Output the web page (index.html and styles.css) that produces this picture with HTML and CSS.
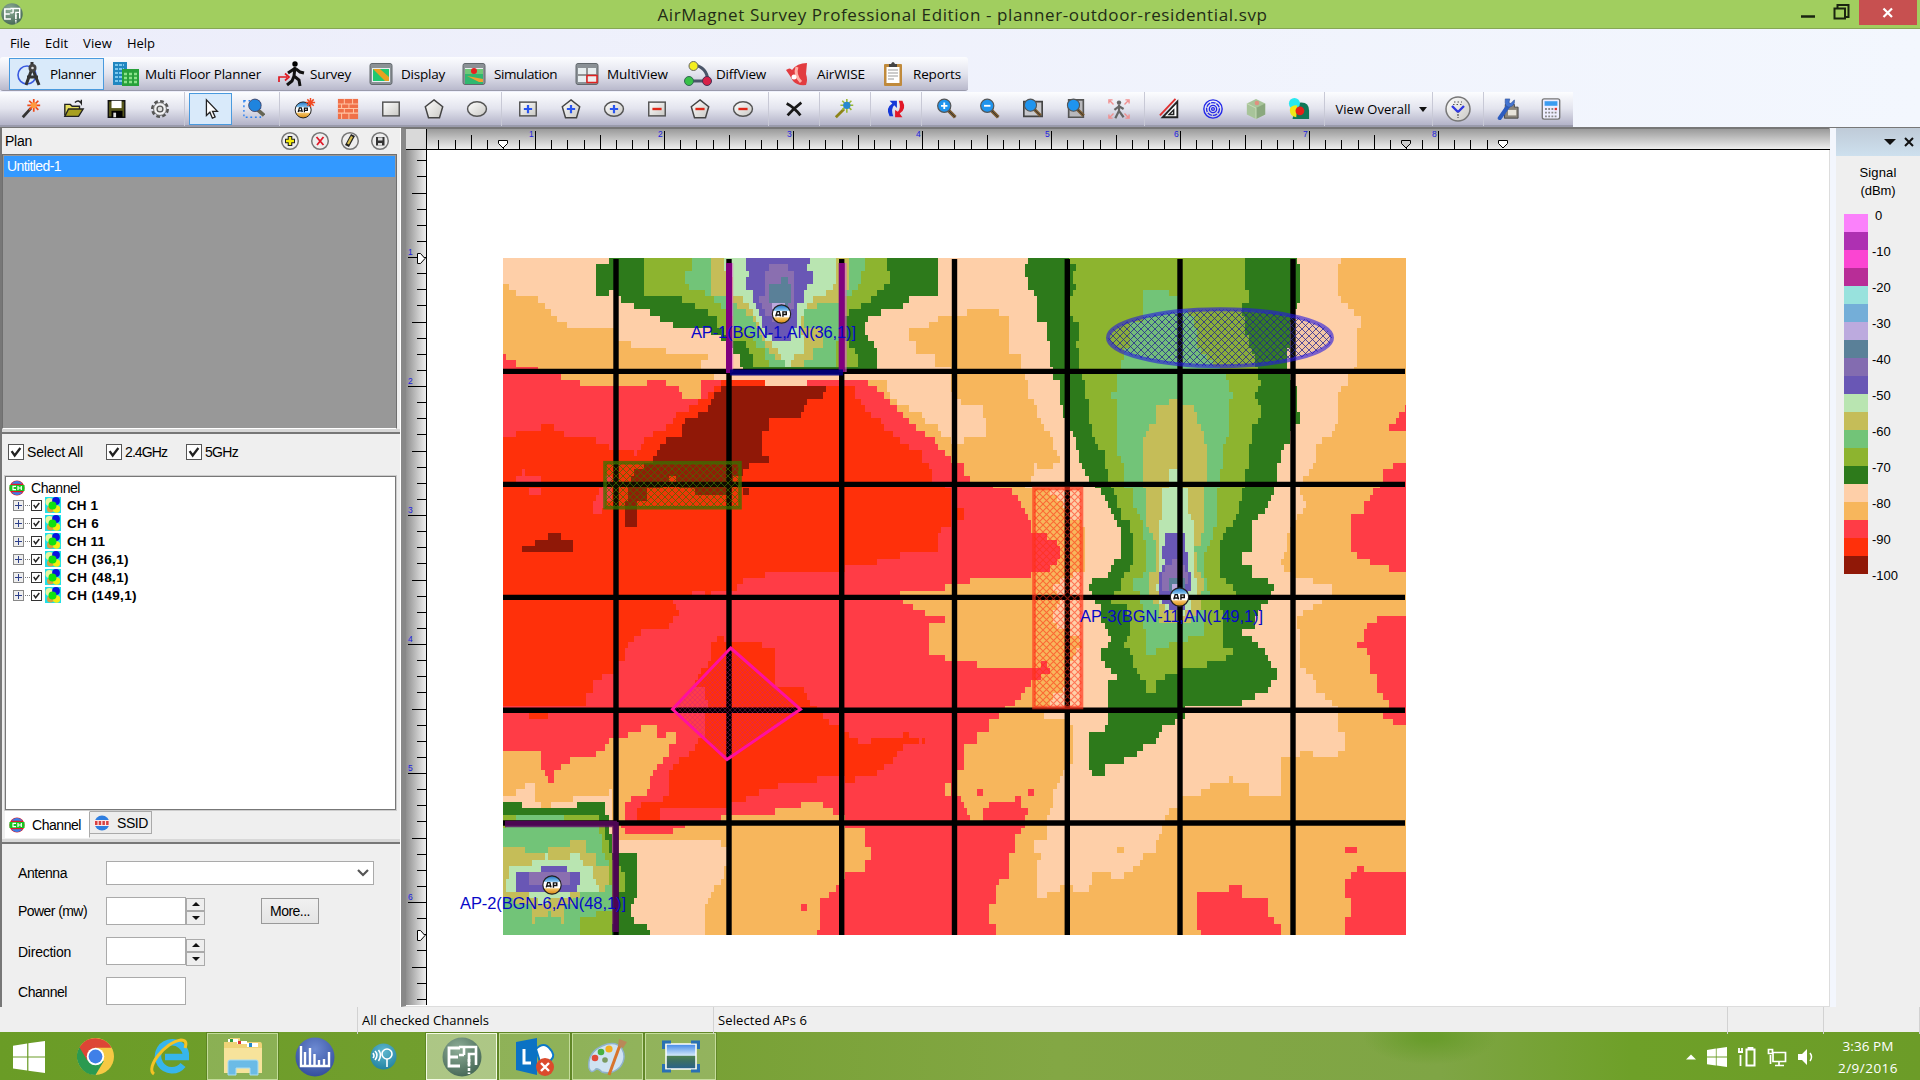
FILE: index.html
```html
<!DOCTYPE html>
<html lang="en">
<head>
<meta charset="utf-8">
<title>AirMagnet Survey Professional Edition</title>
<link rel="stylesheet" href="styles.css">
</head>
<body>
<svg width="0" height="0" class="defs" aria-hidden="true">
  <defs>
    <linearGradient id="shape" x1="0" y1="0" x2="1" y2="1"><stop offset="0" stop-color="#fff"/><stop offset="1" stop-color="#c9c8c4"/></linearGradient>
    <linearGradient id="apfill" x1="0" y1="0" x2="0" y2="1"><stop offset="0" stop-color="#1d6fc0"/><stop offset=".3" stop-color="#7fc0ef"/><stop offset=".36" stop-color="#fff"/><stop offset=".64" stop-color="#fff"/><stop offset=".72" stop-color="#f3c060"/><stop offset="1" stop-color="#d98a10"/></linearGradient>
    <radialGradient id="moss" cx=".4" cy=".3" r=".8"><stop offset="0" stop-color="#8fae98"/><stop offset="1" stop-color="#3f6150"/></radialGradient>
    <radialGradient id="indigo" cx=".5" cy=".3" r=".8"><stop offset="0" stop-color="#6d8ad2"/><stop offset="1" stop-color="#2c4797"/></radialGradient>
    <radialGradient id="teal" cx=".5" cy=".3" r=".8"><stop offset="0" stop-color="#5fb8cf"/><stop offset="1" stop-color="#1b7c9c"/></radialGradient>
    <linearGradient id="sky" x1="0" y1="0" x2="0" y2="1"><stop offset="0" stop-color="#3f86e8"/><stop offset=".45" stop-color="#cfe6fa"/><stop offset=".5" stop-color="#4c7f55"/><stop offset=".68" stop-color="#3c6f64"/><stop offset="1" stop-color="#28618c"/></linearGradient>
    <symbol id="i-ap" viewBox="0 0 22 22"><circle cx="11" cy="11" r="9.600" fill="url(#apfill)" stroke="#222" stroke-width="1.200"/><path d="M5 13.500l1.500-5h2.200l1.300 5M6 12h3.400M12.500 13.800v-5h3.500v2.800h-3.400" fill="none" stroke="#111" stroke-width="1.500"/></symbol>
    <symbol id="i-pent" viewBox="0 0 24 24"><path d="M12 2L21.500 9.500 18 21.500H6L2.500 9.500z" fill="url(#shape)" stroke="#444" stroke-width="1.600"/></symbol>
    <symbol id="i-plus" viewBox="0 0 24 24"><path d="M12 7.500v9M7.500 12h9" stroke="#2a55f0" stroke-width="2.400"/></symbol>
    <symbol id="i-minus" viewBox="0 0 24 24"><path d="M7 12h10" stroke="#e02818" stroke-width="2.600"/></symbol>
    <symbol id="i-rect" viewBox="0 0 24 24"><rect x="3" y="4.500" width="18" height="15" fill="url(#shape)" stroke="#555" stroke-width="1.600"/></symbol>
    <symbol id="i-oval" viewBox="0 0 24 24"><ellipse cx="12" cy="12" rx="10.300" ry="8" fill="url(#shape)" stroke="#555" stroke-width="1.600"/></symbol>
    <symbol id="i-lens" viewBox="0 0 24 24"><path d="M13 13l8 8" stroke="#7a5a30" stroke-width="4"/><path d="M13 13l8 8" stroke="#333" stroke-width="1"/><circle cx="9" cy="8.500" r="7.200" fill="#1f94ee" stroke="#555" stroke-width="1.300"/></symbol>
    <symbol id="i-win" viewBox="0 0 26 26"><path d="M0 3.800L11.500 2v10.500H0zM12.500 1.800L26 0v12.500H12.500zM0 13.500h11.500V24L0 22.300zM12.500 13.500H26V26l-13.500-1.800z" fill="#fff"/></symbol>
    <symbol id="i-ch" viewBox="0 0 16 16"><circle cx="8" cy="8" r="7.600" fill="#e01828"/><path d="M2.600 3.800a6.500 6.500 0 0 1 10.800 0zM2.600 12.200a6.500 6.500 0 0 0 10.800 0z" fill="#3c7ee8"/><path d="M.5 5h15v6H.5z" fill="#17c51f"/><path d="M7 6.300H4v3.400h3M9 6v4M12.300 6v4M9 8h3.300" fill="none" stroke="#fff" stroke-width="1.200"/></symbol>
    <symbol id="i-node" viewBox="0 0 16 16"><path d="M0 0h16v16H0z" fill="#1fe0e8"/><circle cx="4.500" cy="5" r="4" fill="#e9f5a0"/><circle cx="11" cy="4" r="3.900" fill="#0a12e0"/><circle cx="5.500" cy="12" r="3.500" fill="#d8a040"/><circle cx="11.500" cy="12" r="3.700" fill="#f4ee10"/><circle cx="7.500" cy="8.500" r="4" fill="#10e010"/></symbol>
    <symbol id="i-tick" viewBox="0 0 16 16"><path d="M3 7l3.500 5L13 3.500" fill="none" stroke="#222" stroke-width="2.600"/></symbol>
    <symbol id="i-logo" viewBox="0 0 40 40"><circle cx="20" cy="20" r="19.500" fill="url(#moss)"/><path d="M18 11H7v18h11M7 20h9" fill="none" stroke="#fff" stroke-width="2.800"/><path d="M17 10h17v18M22 10v8M17 18h5M34 17h-7v11" fill="none" stroke="#fff" stroke-width="2.600"/><path d="M27 22v15" stroke="#fff" stroke-width="2.600" stroke-dasharray="3 1.500"/></symbol>
    <symbol id="i-frame" viewBox="0 0 24 24"><rect x="1" y="1.500" width="22" height="21" rx="2" fill="#8b9196" stroke="#62686d"/><path d="M3 6h18v14H3z" fill="#e8eef0"/></symbol>
    <pattern id="h-green" width="7" height="7" patternUnits="userSpaceOnUse"><path d="M0 0l7 7M7 0L0 7" stroke="#3f7000" stroke-opacity=".7"/></pattern>
    <pattern id="h-red" width="7" height="7" patternUnits="userSpaceOnUse"><path d="M0 0l7 7M7 0L0 7" stroke="#ff2a10" stroke-opacity=".55" stroke-width="1.100"/></pattern>
    <pattern id="h-blue" width="7" height="7" patternUnits="userSpaceOnUse"><path d="M0 0l7 7M7 0L0 7" stroke="#202090" stroke-opacity=".75"/></pattern>
    <pattern id="h-pink" width="5" height="5" patternUnits="userSpaceOnUse"><path d="M0 0l5 5M5 0L0 5" stroke="#c81890" stroke-opacity=".42" stroke-width=".8"/></pattern>
  </defs>
</svg>

<div class="app">
  <header class="titlebar">
    <svg class="title-logo" width="22" height="22"><use href="#i-logo"/></svg>
    <h1 class="title"><span data-w="610">AirMagnet Survey Professional Edition - planner-outdoor-residential.svp</span></h1>
    <div class="win-buttons">
      <svg width="16" height="28"><path d="M1 16.500h14" stroke="#1a2410" stroke-width="2.500"/></svg>
      <svg width="18" height="28"><path d="M4.500 8V5h11v12h-3" fill="none" stroke="#1a2410" stroke-width="2"/><path d="M1.500 8.500h10.500v10H1.500z" fill="none" stroke="#1a2410" stroke-width="2"/></svg>
      <span class="close"><svg width="12" height="12"><path d="M1.500 1.500l8.500 8.500M10 1.500L1.500 10" stroke="#fff" stroke-width="2.200"/></svg></span>
    </div>
  </header>

  <nav class="menubar"><span data-w="20">File</span><span data-w="23">Edit</span><span data-w="29">View</span><span data-w="28">Help</span></nav>

  <div class="modes">
    <div class="mode active"><svg width="26" height="26"><circle cx="10" cy="14" r="9" fill="none" stroke="#3a5ae0" stroke-width="1.600"/><path d="M15 1v4M14.500 9L9 24M16 9l6 15M10 16h11" stroke="#333" stroke-width="3"/><circle cx="15.500" cy="7" r="4" fill="#444"/><circle cx="15.500" cy="7" r="1.300" fill="#ddd"/></svg><span data-w="46">Planner</span></div>
    <div class="mode"><svg width="26" height="26"><path d="M0 1h14v23H0z" fill="#2186c0"/><path d="M2 4h9M2 8h9M2 12h9M2 16h9M2 20h9" stroke="#7cc8ee" stroke-width="2" stroke-dasharray="3 1"/><path d="M9 8h17v17H9z" fill="#27a03a"/><path d="M11 13h13M11 17h13M11 21h13" stroke="#8be28a" stroke-width="2.400" stroke-dasharray="3 2"/></svg><span data-w="116">Multi Floor Planner</span></div>
    <div class="mode"><svg width="27" height="26"><circle cx="17" cy="3" r="2.700"/><path d="M17 6l-1 9M16 8l-6 4M18 8l4 3 4 1M16 15l5 4 1 6M16 15l-2 5-5 4" fill="none" stroke="#111" stroke-width="3"/><path d="M1 21v-5h8M7 12.500l4 3.500-4 3.500" fill="none" stroke="#e01820" stroke-width="1.700"/></svg><span data-w="41">Survey</span></div>
    <div class="mode"><svg width="24" height="24"><use href="#i-frame"/><path d="M4 7h16v12H4z" fill="#20c870"/><path d="M4 7l7 0 9 8v4h-4z" fill="#e8a020"/></svg><span data-w="44">Display</span></div>
    <div class="mode"><svg width="24" height="24"><use href="#i-frame"/><path d="M3 12h18v10H3z" fill="#30b870"/><path d="M5 14l12 6h4v-3z" fill="#f0a030"/><path d="M3 7h18v5H3z" fill="#70c878"/><circle cx="12" cy="9" r="3" fill="#e82020"/></svg><span data-w="63">Simulation</span></div>
    <div class="mode"><svg width="24" height="24"><use href="#i-frame"/><path d="M3 13h18M12 6v14" stroke="#777" stroke-width="1.500"/><path d="M12 13.500h10v7H12z" fill="#eee" stroke="#e02020" stroke-width="1.500"/></svg><span data-w="61">MultiView</span></div>
    <div class="mode"><svg width="28" height="26"><path d="M10 4q13 2 14 16M6 20h18" fill="none" stroke="#4a5568" stroke-width="3"/><circle cx="9.500" cy="5" r="4.500" fill="#f4ee20" stroke="#666"/><circle cx="5" cy="20" r="4.500" fill="#38c048" stroke="#365"/><circle cx="23" cy="20" r="4.500" fill="#d82048" stroke="#435"/></svg><span data-w="50">DiffView</span></div>
    <div class="mode"><svg width="24" height="24"><path d="M1 8q4-3 6 0Q12 1 22 1l-1 11q2 6 0 11Q12 24 8 19 4 12 1 8z" fill="#e23c40"/><path d="M12 5q-3 8 4 15" fill="none" stroke="#ffb0a8" stroke-width="3"/><circle cx="9" cy="15" r="2.500" fill="#fff"/></svg><span data-w="48">AirWISE</span></div>
    <div class="mode"><svg width="21" height="26"><rect x="1" y="3" width="18" height="22" rx="1" fill="#c08a3c"/><path d="M3.500 6h13v16h-13z" fill="#fff"/><path d="M5 9h10M5 12h10M5 15h10M5 18h6" stroke="#999"/><path d="M6 6V3h2q2-4 4 0h2v3z" fill="#444"/></svg><span data-w="48">Reports</span></div>
  </div>

  <div class="tools">
    <div class="group">
      <i><svg viewBox="0 0 24 24"><path d="M3 21l9-10" stroke="#333" stroke-width="3"/><path d="M15 1v14M8 8h14M10 3l10 10M20 3L10 13" stroke="#f04a18" stroke-width="1.900"/><circle cx="15" cy="8" r="3.300" fill="#ff9a40"/></svg></i>
      <i><svg viewBox="0 0 24 24"><path d="M2 19V7h6l2 2h8v3" fill="#e8e060" stroke="#222" stroke-width="1.500"/><path d="M2 20l4-8h16l-5 8z" fill="#a8a020" stroke="#222" stroke-width="1.500"/><path d="M13 5q4-4 7 1v-4" fill="none" stroke="#222" stroke-width="1.500"/></svg></i>
      <i><svg viewBox="0 0 24 24"><path d="M2.500 3h18v18h-18z" fill="#55551a" stroke="#111" stroke-width="1.500"/><path d="M6 3h11v8H6z" fill="#fff"/><path d="M6 14h12v7H6z" fill="#000"/><path d="M8 16h3v5H8z" fill="#ddd"/></svg></i>
      <i><svg viewBox="0 0 24 24"><circle cx="12" cy="12" r="8.300" fill="none" stroke="#555" stroke-width="3" stroke-dasharray="4 2.500"/><circle cx="12" cy="12" r="7" fill="#f2f2f4" stroke="#666"/><circle cx="12" cy="12" r="3.200" fill="#ddd" stroke="#555" stroke-width="1.400"/></svg></i>
    </div>
    <div class="group">
      <i class="active"><svg viewBox="0 0 24 24"><path d="M7 2v17l3.800-3.500L13.500 22l3-1.300-2.800-6.200H19z" fill="#fff" stroke="#222" stroke-width="1.400"/></svg></i>
      <i><svg viewBox="0 0 24 24"><path d="M1 3h18v18H1z" fill="none" stroke="#2a80f0" stroke-dasharray="2 3" stroke-width="1.500"/><path d="M15 12l8 7" stroke="#665" stroke-width="4"/><circle cx="13" cy="8" r="6.800" fill="#1f84de" stroke="#446"/></svg></i>
    </div>
    <div class="group">
      <i><svg viewBox="0 0 24 24"><use href="#i-ap" x="0" y="3" width="20" height="20"/><path d="M18 0v10M13 5h10M14.500 1.500l7 7M21.500 1.500l-7 7" stroke="#f04820" stroke-width="1.600"/></svg></i>
      <i><svg viewBox="0 0 24 24"><path d="M1 1h22v22H1z" fill="#f07048"/><path d="M1 6.500h22M1 11.500h22M1 16.500h22M8 1v5.500M17 1v5.500M5 6.500v5M13 6.500v5M8 11.500v5M18 11.500v5M5 16.500V23M13 16.500V23" stroke="#ffc4a4" stroke-width="1.100"/></svg></i>
      <i><svg viewBox="0 0 24 24"><use href="#i-rect"/></svg></i>
      <i><svg viewBox="0 0 24 24"><use href="#i-pent"/></svg></i>
      <i><svg viewBox="0 0 24 24"><use href="#i-oval"/></svg></i>
    </div>
    <div class="group">
      <i><svg viewBox="0 0 24 24"><use href="#i-rect"/><use href="#i-plus"/></svg></i>
      <i><svg viewBox="0 0 24 24"><use href="#i-pent"/><use href="#i-plus"/></svg></i>
      <i><svg viewBox="0 0 24 24"><use href="#i-oval"/><use href="#i-plus"/></svg></i>
      <i><svg viewBox="0 0 24 24"><use href="#i-rect"/><use href="#i-minus"/></svg></i>
      <i><svg viewBox="0 0 24 24"><use href="#i-pent"/><use href="#i-minus"/></svg></i>
      <i><svg viewBox="0 0 24 24"><use href="#i-oval"/><use href="#i-minus"/></svg></i>
    </div>
    <div class="group"><i><svg viewBox="0 0 24 24"><path d="M4 6q8 4 15 13M20 5Q12 11 5 19" fill="none" stroke="#181818" stroke-width="3"/></svg></i></div>
    <div class="group"><i><svg viewBox="0 0 24 24"><path d="M2 21l9-9" stroke="#8d8418" stroke-width="3"/><path d="M14 1v15M7 8h14M9 3l10 10M19 3L9 13" stroke="#98b830" stroke-width="1.700"/><circle cx="14" cy="8" r="4" fill="#2888d0"/></svg></i></div>
    <div class="group"><i><svg viewBox="0 0 24 24"><path d="M5 20q-5-9 3-14L5 3h8v8l-3-3q-4 4-1 12z" fill="#1538d8"/><path d="M19 3q5 9-3 14l3 4h-8v-8l3 2q4-4 1-12z" fill="#e21828"/></svg></i></div>
    <div class="group">
      <i><svg viewBox="0 0 24 24"><use href="#i-lens"/><path d="M9 5v7M5.500 8.500h7" stroke="#fff" stroke-width="2"/></svg></i>
      <i><svg viewBox="0 0 24 24"><use href="#i-lens"/><path d="M5.500 8.500h7" stroke="#fff" stroke-width="2"/></svg></i>
      <i><svg viewBox="0 0 24 24"><path d="M2 4h20v16H2z" fill="#c8c8cc" stroke="#444" stroke-width="1.800"/><use href="#i-lens" x="1" width="22" height="22"/></svg></i>
      <i><svg viewBox="0 0 24 24"><path d="M4 2h16v19H4z" fill="#b8b8bc" stroke="#555" stroke-width="1.800"/><use href="#i-lens" x="1" width="22" height="22"/></svg></i>
      <i><svg viewBox="0 0 24 24"><circle cx="12" cy="5" r="2.400" fill="#666"/><path d="M12 7v8M12 9l-5 4M12 9l5 3M12 14l-4 8M12 14l5 7" stroke="#666" stroke-width="2.400"/><path d="M1 6V2h4M19 2h4v4M1 18v4h4M19 22h4v-4M2 3l4 4M22 3l-4 4M2 21l4-4M22 21l-4-4" fill="none" stroke="#f09090" stroke-width="1.500"/></svg></i>
    </div>
    <div class="group">
      <i><svg viewBox="0 0 24 24"><path d="M20 4v17H4z" fill="#fff" stroke="#222" stroke-width="2"/><path d="M16 13v5h-5z" fill="none" stroke="#222" stroke-width="1.600"/><path d="M1 19L18 1" stroke="#e03030" stroke-width="2"/></svg></i>
      <i><svg viewBox="0 0 24 24" fill="none" stroke="#2428e8" stroke-width="1.500"><circle cx="12" cy="12" r="10"/><circle cx="12" cy="12" r="7" stroke-dasharray="5 1"/><circle cx="12" cy="12" r="4"/><circle cx="12" cy="12" r="1.500"/></svg></i>
      <i><svg viewBox="0 0 24 24"><path d="M12 1l10 5v12l-10 5-10-5V6z" fill="#a8c49a"/><path d="M12 11l10-5v12l-10 5z" fill="#8aa87e"/><path d="M2 6l10 5v12" fill="none" stroke="#cdb"/><circle cx="13" cy="5.500" r="2.500" fill="#e09080"/></svg></i>
      <i><svg viewBox="0 0 24 24"><path d="M8 6q15-4 15 8v9H5z" fill="#107858"/><circle cx="7" cy="6" r="6" fill="#28e8f0"/><path d="M2 13q0-5 8-5l-1 13q-7-1-7-8z" fill="#f0e818"/><circle cx="13" cy="14" r="4.800" fill="#e82018"/></svg></i>
    </div>
    <div class="group view"><span data-w="75">View Overall</span><b class="caret"></b></div>
    <div class="group"><i><svg viewBox="0 0 26 26" class="big"><circle cx="13" cy="13" r="12" fill="url(#shape)" stroke="#777" stroke-width="1.500"/><path d="M13 15v7" stroke="#888" stroke-width="2" stroke-dasharray="2 1"/><path d="M7 10l6 6M19 10l-6 6" stroke="#3038e0" stroke-width="2.400"/><path d="M9 6h8M8 8.500h10" stroke="#555" stroke-dasharray="1.500 2"/></svg></i></div>
    <div class="group">
      <i><svg viewBox="0 0 24 24"><path d="M9 10V7h10v3h4v12H8z" fill="#8a847a" stroke="#444"/><path d="M12 13h9v6h-9z" fill="#e8e4da"/><path d="M3 22L12 9" stroke="#2c5cc0" stroke-width="4.500" stroke-linecap="round"/><path d="M9 1q-1 9 4 9 7-1 6-8l-4 4-2-1 1-4z" fill="#4474d0" stroke="#2a4a90" stroke-width=".6"/></svg></i>
      <i><svg viewBox="0 0 24 24"><rect x="2.500" y="1" width="19" height="22" rx="2" fill="#eef" stroke="#777" stroke-width="1.500"/><path d="M5 3.500h14v5H5z" fill="#3b9cf0"/><path d="M5.500 12h10M5.500 16h13M5.500 20h13" stroke="#888" stroke-width="2" stroke-dasharray="2 1.500"/><path d="M16 12h2.500" stroke="#e03030" stroke-width="2.500"/></svg></i>
    </div>
  </div>

  <main class="work">
    <aside class="side">
      <section class="plan">
        <div class="plan-head"><span data-w="27">Plan</span>
          <div class="plan-tools">
            <svg width="20" height="20"><circle cx="10" cy="10" r="8.300" fill="#eee" stroke="#777" stroke-width="1.500"/><path d="M10 5v10M5 10h10" stroke="#222" stroke-width="4.600"/><path d="M10 6v8M6 10h8" stroke="#f4ec10" stroke-width="2.400"/></svg>
            <svg width="20" height="20"><circle cx="10" cy="10" r="8.300" fill="#eee" stroke="#777" stroke-width="1.500"/><path d="M6.500 6l7 8M13.500 6L7 14" stroke="#e01828" stroke-width="1.800"/></svg>
            <svg width="20" height="20"><circle cx="10" cy="10" r="8.300" fill="#eee" stroke="#777" stroke-width="1.500"/><path d="M7 15l6-11" stroke="#222" stroke-width="4.500"/><path d="M8 13l4-7.500" stroke="#d8c050" stroke-width="2.200"/></svg>
            <svg width="20" height="20"><circle cx="10" cy="10" r="8.300" fill="#eee" stroke="#777" stroke-width="1.500"/><path d="M6 6h8.500v8.500H6z" fill="#333"/><path d="M8 6.500h4.500v3H8zM8 12h4v2.500H8z" fill="#ddd"/></svg>
          </div>
        </div>
        <div class="plan-list"><div class="row"><span data-w="54">Untitled-1</span></div></div>
      </section>
      <section class="filter">
        <div class="bands">
          <label><span class="check"><svg width="14" height="14"><use href="#i-tick"/></svg></span><span data-w="56">Select All</span></label>
          <label><span class="check"><svg width="14" height="14"><use href="#i-tick"/></svg></span><span data-w="42">2.4GHz</span></label>
          <label><span class="check"><svg width="14" height="14"><use href="#i-tick"/></svg></span><span data-w="33">5GHz</span></label>
        </div>
        <div class="tree">
          <div class="root"><svg width="16" height="16"><use href="#i-ch"/></svg><span data-w="49">Channel</span></div>
          <div id="channels"></div>
        </div>
        <div class="tabs">
          <div class="tab on"><svg width="16" height="16"><use href="#i-ch"/></svg><span data-w="49">Channel</span></div>
          <div class="tab"><svg width="16" height="16"><circle cx="8" cy="8" r="7.500" fill="#2f7ee0"/><path d="M0 5h16v6H0z" fill="#fbe9ea"/><path d="M1 8h14" stroke="#d84040" stroke-width="4" stroke-dasharray="2.500 1.200"/></svg><span data-w="31">SSID</span></div>
        </div>
      </section>
      <section class="form">
        <div class="field f1"><label data-w="49">Antenna</label><div class="select"><svg width="12" height="8"><path d="M1 1l5 5 5-5" fill="none" stroke="#555" stroke-width="2.200"/></svg></div></div>
        <div class="field f2"><label data-w="69">Power (mw)</label><div class="input"></div><div class="spin"><b class="up"></b><b class="down"></b></div><button><span data-w="40">More...</span></button></div>
        <div class="field f3"><label data-w="53">Direction</label><div class="input"></div><div class="spin"><b class="up"></b><b class="down"></b></div></div>
        <div class="field f4"><label data-w="49">Channel</label><div class="input"></div></div>
      </section>
    </aside>

    <div class="stage">
      <div class="corner"></div>
      <svg class="ruler-x" id="rx" viewBox="427 129 1403 20" width="1403" height="20"></svg>
      <svg class="ruler-y" id="ry" viewBox="406 150 20 855" width="20" height="855"></svg>
      <svg class="paper" viewBox="427 150 1403 855" width="1403" height="855">
        <g id="heat" shape-rendering="crispEdges"></g>
        <path d="M616 259v676M729 259v676M841.700 259v676M954.500 259v676M1067.300 259v676M1180 259v676M1293 259v676M503 371.400h902M503 484.400h902M503 597.400h902M503 710.200h902M503 823h902" stroke="#000" stroke-width="5.400"/>
        <path d="M732 263v109M845.500 263v109" stroke="#e060d0" stroke-opacity=".6" stroke-width="2.500"/>
        <path d="M729 263v110M841.700 263v109" stroke="#80007f" stroke-width="6"/>
        <path d="M730 372.500h113" stroke="#00007f" stroke-opacity=".9" stroke-width="6"/>
        <path d="M505 824h112M615.500 822v110" fill="none" stroke="#5f0866" stroke-opacity=".8" stroke-width="6.500"/>
        <rect x="605" y="462.700" width="135" height="45" fill="#7a6000" fill-opacity=".12"/>
        <rect x="605" y="462.700" width="135" height="45" fill="url(#h-green)" stroke="#3a7000" stroke-opacity=".75" stroke-width="3.600"/>
        <rect x="1034" y="488.500" width="47.500" height="219" fill="url(#h-red)" stroke="#ff3018" stroke-opacity=".65" stroke-width="3.600"/>
        <ellipse cx="1220" cy="337.700" rx="112" ry="28.500" fill="#8080a0" fill-opacity=".1"/>
        <ellipse cx="1220" cy="337.700" rx="112" ry="28.500" fill="url(#h-blue)" stroke="#2418e0" stroke-opacity=".6" stroke-width="4"/>
        <path d="M730.700 648L800.500 709.300 727 759.500 672.500 709.300z" fill="url(#h-pink)" stroke="#ff10a0" stroke-width="3"/>
        <use href="#i-ap" x="771" y="303.500" width="21" height="21"/>
        <use href="#i-ap" x="1169" y="586.500" width="21" height="21"/>
        <use href="#i-ap" x="541.500" y="874.500" width="21" height="21"/>
        <g class="ap-label">
          <text x="691" y="338" textLength="165">AP-1(BGN-1,AN(36,1)]</text>
          <text x="1080" y="621.500" textLength="183">AP-3(BGN-11,AN(149,1)]</text>
          <text x="460" y="909" textLength="166">AP-2(BGN-6,AN(48,1)]</text>
        </g>
      </svg>
    </div>

    <aside class="legend">
      <div class="legend-head"><b class="caret"></b><svg width="12" height="12"><path d="M2 2l8 8M10 2l-8 8" stroke="#111" stroke-width="2"/></svg></div>
      <div class="legend-title"><span data-w="37">Signal</span><br><span data-w="35">(dBm)</span></div>
      <div class="legend-body"><div class="swatches" id="swatches"></div><div class="values" id="values"></div></div>
    </aside>
  </main>

  <footer class="status"><span></span><span><em data-w="127">All checked Channels</em></span><span><em data-w="89">Selected APs 6</em></span><span></span><span></span></footer>

  <div class="taskbar">
    <div class="apps">
      <div class="app-btn start"><svg width="32" height="32"><use href="#i-win"/></svg></div>
      <div class="app-btn"><svg width="37" height="37" viewBox="0 0 36 36"><circle cx="18" cy="18" r="18" fill="#f6c944"/><path d="M18 18L2.400 9A18 18 0 0 0 18 36l8-13.500z" fill="#2b9a50"/><path d="M2.400 9A18 18 0 0 1 33.600 9.500H18L10 22z" fill="#dd4536"/><circle cx="18" cy="18" r="8.500" fill="#fff"/><circle cx="18" cy="18" r="6.700" fill="#3f80e8"/></svg></div>
      <div class="app-btn"><svg width="40" height="38" viewBox="0 0 40 38"><path d="M34 27a14 14 0 1 1 3-8H16" fill="none" stroke="#37b5ec" stroke-width="6.500"/><path d="M5 36C-4 30 16 4 32 2q7 0 4 8" fill="none" stroke="#f4c325" stroke-width="3"/></svg></div>
      <div class="app-btn framed"><svg width="40" height="40" viewBox="0 0 40 40"><path d="M1 5h6V1h10v4h20q2 0 2 3v26H1z" fill="#f0d478"/><path d="M1 11h38v25H1z" fill="#f7e39b"/><path d="M5 2h10v3H5z" fill="#fff"/><path d="M7 2h3v3H7z" fill="#2d9a40"/><path d="M14 4h10v3H14z" fill="#fff"/><path d="M15 4h3v3h-3z" fill="#d33"/><path d="M24 6h11v4H24z" fill="#fff"/><path d="M26 6h3v4h-3z" fill="#28c"/><path d="M5 38V25q0-2 2-2h26q2 0 2 2v13h-8v-7H13v7z" fill="#6bbbe6" stroke="#a8dcf4"/></svg></div>
      <div class="app-btn"><svg width="40" height="40" viewBox="0 0 40 40"><circle cx="20" cy="20" r="19.500" fill="url(#indigo)"/><path d="M6 9v20h28V15M10 28V15M15 28V11M19.500 28V17M24 28v-5M29 28v-6" fill="none" stroke="#fff" stroke-width="2.400"/></svg></div>
      <div class="app-btn"><svg width="27" height="27" viewBox="0 0 27 27"><circle cx="13.500" cy="13.500" r="13" fill="url(#teal)"/><circle cx="17" cy="11" r="5" fill="none" stroke="#fff" stroke-width="1.600"/><path d="M17 16v8M5 8q4 4 0 9M8.500 7q4 5 0 11M3 10q2 3 0 5" fill="none" stroke="#fff" stroke-width="1.600"/></svg></div>
      <div class="app-btn framed current"><svg width="40" height="40"><use href="#i-logo"/></svg></div>
      <div class="app-btn framed"><svg width="40" height="40" viewBox="0 0 40 40"><path d="M21 12q8-8 14 0 6 6 1 11l-10 5z" fill="#fff" stroke="#0b78c8" stroke-width="2"/><path d="M1 5l21-4v37L1 33z" fill="#0b72c4"/><path d="M9 12v14h7" fill="none" stroke="#fff" stroke-width="3"/><circle cx="30" cy="30" r="9" fill="#dc4a2c"/><path d="M26 26l8 8M34 26l-8 8" stroke="#fff" stroke-width="2.400"/></svg></div>
      <div class="app-btn framed"><svg width="40" height="40" viewBox="0 0 40 40"><path d="M1 31Q-1 16 14 9q14-6 20 3 5 9-2 18-8 8-18 5-5-5-7-2-4 4-6-2z" fill="#cfe3f2" stroke="#8fb2cc" stroke-width="1.500"/><circle cx="7" cy="21" r="3.300" fill="#e04a3a"/><circle cx="13" cy="15" r="3.300" fill="#48b040"/><circle cx="21" cy="12" r="3.600" fill="#f4b020"/><circle cx="17" cy="23" r="2.800" fill="#7a9a60"/><path d="M21 38l11-30" stroke="#d8742c" stroke-width="3"/><path d="M30 9l1-7 8 3-4 6z" fill="#b98858"/></svg></div>
      <div class="app-btn framed"><svg width="38" height="33" viewBox="0 0 38 33"><path d="M4 4h30v25H4z" fill="url(#sky)" stroke="#fff" stroke-width="1.500"/><path d="M1.500 9V2H9M29 2h7.500v7M1.500 24v7H9M29 31h7.500v-7" fill="none" stroke="#2a70b4" stroke-width="3"/></svg></div>
    </div>
    <div class="tray">
      <svg width="10" height="6"><path d="M0 5.500L5 .5l5 5z" fill="#fff"/></svg>
      <svg width="20" height="20"><use href="#i-win"/></svg>
      <svg width="20" height="20"><path d="M9.500 2.500h8v16h-8z" fill="none" stroke="#fff" stroke-width="2"/><path d="M11.500 0h4v2h-4zM3.500 8v11M1 5h5M2 1v4M5 1v4" fill="#fff" stroke="#fff" stroke-width="1.800"/></svg>
      <svg width="20" height="20"><path d="M6 5.500h12.500v9H6zM8 18.500h9M12 15v3M3.500 8v9M1.500 2.500h4v4h-4z" fill="none" stroke="#fff" stroke-width="1.700"/></svg>
      <svg width="17" height="20"><path d="M1 7h4l5-5v16l-5-5H1z" fill="#fff"/><path d="M13 6q3 4 0 8" fill="none" stroke="#fff" stroke-width="1.500"/></svg>
      <div class="clock"><span data-w="51">3:36 PM</span><span data-w="60">2/9/2016</span></div>
    </div>
  </div>
</div>
<script src="app.js"></script>
</body>
</html>
```
FILE: styles.css
```css
* { box-sizing: border-box; }
body { margin: 0; overflow: hidden; background: #eef1fb; color: #000; font-family: "Open Sans", "Noto Sans", sans-serif; }
.defs { position: absolute; }
svg { display: block; flex: none; }
.app { width: 1920px; height: 1080px; display: grid; grid-template-rows: 29px 28px 35px 35px 880px 25px 48px; background: linear-gradient(90deg, #ecedfa, #f3f7fe); }

.titlebar { display: flex; align-items: flex-start; background: #a1ce5f; border-bottom: 1px solid #86a754; }
.title-logo { margin: 3px 0 0 1px; }
.title { flex: 1; margin: 0; padding: 4px 0 0 105px; text-align: center; font-size: 17px; line-height: 22px; font-weight: 400; color: #222c16; white-space: nowrap; }
.win-buttons { width: 163px; margin-left: -40px; display: flex; gap: 17px; padding-left: 43px; }
.win-buttons .close { width: 58px; height: 25px; background: #c75050; display: grid; place-items: center; margin-left: -9px; }

.menubar { display: flex; padding: 4px 0 0 10px; font-size: 13px; line-height: 20px; gap: 15px; }

.modes { width: 968px; height: 34px; padding-left: 9px; display: grid; grid-template-columns: 104px 165px 91px 93px 113px 109px 101px 98px 85px; background: linear-gradient(#fcfdff, #e3e4ee 50%, #b9b9cc); border-bottom: 1px solid #9a9bac; border-radius: 3px; font-size: 13.500px; }
.mode { display: grid; grid-template-columns: 32px auto; justify-content: start; align-items: center; height: 33px; white-space: nowrap; }
.mode.active { grid-template-columns: 33px auto; }
.mode:last-child { grid-template-columns: 30px auto; }
.mode.active { width: 95px; margin-top: 1px; padding-left: 7px; height: 32px; background: #d9eafa; border: 1px solid #4a9ade; }

.tools { width: 1573px; height: 35px; padding-left: 6px; display: grid; grid-template-columns: 178px 95px 222px 267px 51px 51px 51px 223px 180px 108px 51px 91px; background: linear-gradient(#fcfdff, #e3e4ee 50%, #b3b3c8); border-bottom: 2px solid #9a9bac; }
.group { display: flex; justify-content: center; align-items: center; height: 34px; border-left: 1px solid #c8c9d6; }
.group:first-child { border-left: 0; }
.group i { width: 43px; height: 32px; display: grid; place-items: center; }
.group i.active { background: #d9eafa; border: 1px solid #4a9ade; }
.group svg { width: 22px; height: 22px; }
.group svg.big { width: 28px; height: 26px; }
.view { gap: 8px; font-size: 13px; white-space: nowrap; padding-left: 5px; }
.caret { border: 4px solid transparent; border-top: 5px solid #111; border-bottom: 0; }

.work { display: grid; grid-template-columns: 401px 1429px 90px; border-top: 1px solid #777; background: #f3f6fd; }
.side { display: flex; flex-direction: column; font-family: "Liberation Sans", Arial, sans-serif; font-size: 14px; background: #efefef; border-left: 2px solid #777; border-right: 1px solid #fff; white-space: nowrap; }
.plan-head { height: 26px; display: flex; align-items: center; padding: 0 10px 0 3px; justify-content: space-between; }
.plan-tools { display: flex; gap: 10px; }
.plan-list { height: 275px; margin-right: 3px; padding: 1px; background: #989898; border: 1px solid #6f6f6f; border-bottom-color: #fff; }
.plan-list .row { height: 21px; padding-left: 3px; line-height: 21px; background: #3399ff; color: #fff; }
.filter { height: 407px; margin-top: 3px; border-top: 2px solid #777; padding: 1px 3px 0; box-shadow: 0 -3px #d8d8d8; }
.bands { height: 41px; display: flex; align-items: center; padding: 0 0 7px 3px; }
.bands label { display: flex; align-items: center; gap: 3px; }
.bands label:nth-child(1) { width: 98px; }
.bands label:nth-child(2) { width: 80px; }
.check { width: 16px; height: 16px; border: 1px solid #555; background: #fff; }
.tree { width: 391px; height: 334px; background: #fff; border: 1px solid #777; outline: 1px solid #ccc; padding: 2px 3px; }
.root { height: 17px; display: flex; align-items: center; gap: 6px; }
.channel { height: 18px; display: flex; align-items: center; font-weight: 700; font-size: 13.500px; }
.channel .exp { width: 11px; height: 11px; margin-left: 4px; border: 1px solid #888; background: linear-gradient(#2c3f8c, #2c3f8c) center / 7px 1px no-repeat, linear-gradient(#2c3f8c, #2c3f8c) center / 1px 7px no-repeat, #eee; }
.channel .dots { width: 5px; margin: 0 1px; border-top: 1px dotted #777; }
.channel .check { width: 11px; height: 11px; margin-right: 3px; border-color: #333; }
.channel .name { margin-left: 6px; }
.tabs { display: flex; height: 26px; align-items: flex-start; }
.tab { height: 23px; width: 62px; display: flex; align-items: center; gap: 7px; padding-left: 4px; margin-top: 1px; background: #ededed; border: 1px solid #aaa; border-left: 0; }
.tab.on { height: 27px; width: 85px; margin-top: 1px; background: #fff; border-color: #fff #aaa #fff #fff; padding-left: 4px; padding-top: 1px; }
.form { flex: 1; margin-top: 3px; border-top: 2px solid #777; box-shadow: 0 -3px #d8d8d8; padding: 15px 0 0 16px; overflow: hidden; }
.field { display: flex; height: 28px; align-items: center; }
.field label { width: 88px; flex: none; }
.f1 { margin-bottom: 10px; } .f2 { margin-bottom: 13px; } .f3 { margin-bottom: 12px; }
.f3 .input { margin-top: -2px; }
.f4 .input { margin-top: -2px; }
.select { width: 268px; height: 24px; background: #fff; border: 1px solid #aaa; display: flex; justify-content: flex-end; align-items: center; padding-right: 4px; }
.input { width: 80px; height: 28px; background: #fff; border: 1px solid #aaa; }
.spin { width: 19px; height: 27px; display: grid; grid-template-rows: 1fr 1fr; }
.spin b { border: 1px solid #aaa; background: #eee; display: grid; place-items: center; }
.spin b::after { content: ""; border: 4px solid transparent; }
.spin .up::after { border-bottom: 4px solid #111; border-top: 0; }
.spin .down::after { border-top: 4px solid #111; border-bottom: 0; }
.field button { width: 58px; height: 26px; margin-left: 56px; padding: 0; font: inherit; background: linear-gradient(#f0f0f0, #e4e4e4); border: 1px solid #999; }

.stage { border-left: 5px solid #888; display: grid; grid-template: 21px 855px / 21px 1402px; align-content: start; background: #fff; border-top: 1px solid #777; border-bottom: 1px solid #ddd; border-right: 1px solid #ddd; }
.corner { background: #d9d9d9; border-right: 1px solid #000; border-bottom: 1px solid #000; }
.ruler-x { background: linear-gradient(#9a9a9a, #eee); border-bottom: 1px solid #000; height: 21px; width: 1403px; }
.ruler-y { background: linear-gradient(90deg, #8f8f8f, #eee); border-right: 1px solid #000; width: 21px; height: 855px; }
.ruler-x text, .ruler-y text { font: 8.500px "Liberation Sans", Arial, sans-serif; fill: #2020e0; }
.paper { width: 1403px; height: 855px; }
.ap-label text { font: 16.500px "Liberation Sans", Arial, sans-serif; fill: #0808c8; }

.legend { margin-left: 6px; background: #efefef; font-family: "Liberation Sans", Arial, sans-serif; font-size: 13px; }
.legend-head { height: 28px; background: linear-gradient(#bfcbd8, #cde0ee); display: flex; justify-content: flex-end; align-items: center; gap: 7px; padding-right: 5px; }
.legend-head .caret { border-width: 6px 6px 0; }
.legend-title { text-align: center; line-height: 18px; padding-top: 8px; }
.legend-body { display: flex; margin: 14px 0 0 8px; }
.swatches { width: 24px; height: 360px; display: grid; grid-auto-rows: 18px; }
.values { margin: -16px 0 0 4px; line-height: 36px; }
.values div:first-child { padding-left: 3px; }

.status { display: grid; grid-template-columns: 358px 356px 1014px 96px 96px; background: #efefef; font-size: 13px; line-height: 27px; white-space: nowrap; z-index: 1; }
.status span { padding-left: 4px; border-right: 1px solid #d2d2d2; }
.status em { font-style: normal; }

.taskbar { display: flex; justify-content: space-between; background: radial-gradient(ellipse 75px 32px at 1430px 4px, rgba(98, 154, 36, .75) 15%, transparent 90%), linear-gradient(90deg, #6a9c26, #749f30 30%, #83a744 55%, #7fa545 75%, #6ea028 85%, #6c9c28); }
.apps { display: flex; gap: 2px; padding: 1px 0 0; }
.app-btn { width: 71px; height: 47px; display: grid; place-items: center; }
.app-btn svg { max-width: 100%; }
.app-btn.start { width: 58px; }
.app-btn:nth-child(3) { width: 72px; }
.app-btn:nth-child(6) { width: 71px; padding-right: 11px; }
.app-btn:nth-child(5) { padding-right: 1px; }
.app-btn.framed { background: rgba(255, 255, 255, .2); border: 1px solid rgba(240, 255, 210, .55); outline: 1px solid rgba(60, 90, 20, .35); }
.app-btn.current { background: rgba(255, 255, 255, .42); border: 1px solid #f4fbe4; }
.tray { display: flex; align-items: center; gap: 10px; padding-right: 21px; margin-top: 1px; }
.tray svg:nth-child(1) { margin-right: 1px; }
.clock { width: 62px; margin-left: 13px; display: flex; flex-direction: column; align-items: center; color: #fff; font-size: 13.500px; line-height: 22px; white-space: nowrap; }
```
FILE: app.js
```js
const COLORS = {
  O: '#f7b65c', P: '#fecfa8', R: '#ff3c46', D: '#ff300a', M: '#901807', G: '#2d7a1b', Y: '#8db42f',
  T: '#72c478', K: '#c5bd58', L: '#b9e5b1', V: '#6957b5', U: '#8a6fb0', S: '#5a8098', W: '#bcaade'
};

// Coverage sections. Contours are stored in thirds of a pixel from the section origin;
// clip is [left, top, right, bottom] on the floor plan.
const SECTIONS = [
  { origin: [490, 500], clip: [503, 500, 960, 935], base: 'R', shapes: [
    ['D', '39,0 1385,0 1400,35 1418,45 1410,60 1385,80 1340,92 1340,150 1245,152 1225,180 1145,188 1140,205 1115,190 1090,200 970,222 970,208 855,208 855,222 780,228 750,248 735,270 640,285 640,265 605,265 605,283 545,300 565,340 545,370 525,385 520,400 505,385 470,385 430,420 410,440 405,475 388,485 385,520 335,520 330,540 312,545 310,575 292,585 292,620 39,622'],
    ['D', '118,638 175,638 170,655 155,668 135,658 118,655'],
    ['D', '680,405 700,405 700,425 725,420 795,422 825,440 855,452 855,555 930,560 950,580 955,605 980,625 1010,660 1060,690 1110,725 1110,730 1145,730 1145,712 1240,710 1245,692 1262,695 1262,720 1295,725 1302,712 1302,730 1250,735 1230,750 1215,780 1185,790 1165,820 1110,832 1070,848 1060,830 1010,822 970,845 880,852 820,870 765,900 720,915 640,930 600,930 600,935 535,930 505,935 505,960 440,960 440,930 460,912 515,905 535,880 535,820 560,790 610,745 640,710 640,660 655,620 640,570 615,560 645,500 660,490 662,435 680,425'],
    ['M', '400,0 447,0 447,90 390,90 390,80 408,80 408,60 400,50'],
    ['M', '96,130 135,130 135,110 175,110 195,92 213,92 213,110 250,112 250,150 96,150'],
    ['R', '312,0 345,0 345,25 335,40 312,40'],
    ['O', '39,750 155,750 158,790 160,820 175,845 190,845 195,815 215,792 255,772 312,770 315,750 350,748 352,712 415,712 420,695 450,690 455,675 475,675 475,685 500,685 500,708 525,712 525,695 560,700 560,725 545,730 535,760 515,790 500,805 480,850 475,880 430,895 405,910 400,955 388,980 420,1005 530,1005 560,978 660,960 720,950 805,945 850,935 930,925 935,908 970,908 1010,920 1040,940 1068,950 1068,980 1125,980 1125,1040 1145,1050 1145,1075 1125,1080 1125,1118 1068,1122 1065,1138 1045,1158 1010,1190 990,1200 990,1285 972,1305 39,1305'],
    ['R', '932,1214 952,1214 952,1236 932,1236'],
    ['O', '1282,265 1355,265 1365,248 1440,238 1560,238 1560,497 1455,497 1455,480 1385,480 1360,475 1358,458 1320,458 1320,362 1358,360 1358,342 1322,342 1310,325 1265,322 1265,298'],
    ['O', '1560,635 1500,665 1495,690 1460,710 1450,740 1430,745 1420,810 1405,820 1405,885 1420,890 1420,920 1440,925 1440,960 1475,958 1475,930 1510,925 1520,905 1560,905'],
    ['O', '1360,850 1385,850 1385,888 1360,888'],
    ['P', '388,1015 450,1030 555,1030 570,1018 620,1020 650,1015 690,1025 707,1045 707,1098 700,1140 675,1155 660,1200 642,1215 642,1305 388,1305'],
    ['P', '39,885 75,885 80,868 110,858 135,858 135,905 170,925 215,900 350,885 355,868 370,868 370,1000 385,1020 385,1060 360,1060 350,960 39,960'],
    ['G', '39,898 85,905 88,915 145,918 150,928 185,930 260,925 262,914 350,914 352,960 370,1050 445,1058 447,1180 425,1212 418,1245 430,1260 475,1280 477,1305 39,1305'],
    ['Y', '39,935 300,938 320,948 340,965 360,1060 385,1105 408,1112 408,1165 385,1180 370,1270 360,1305 39,1305'],
    ['T', '39,978 85,948 165,948 280,960 320,962 330,985 340,1060 360,1110 362,1240 330,1240 270,1250 270,1305 39,1305'],
    ['K', '39,1045 108,1045 110,1060 150,1060 190,1045 240,1045 245,1025 290,1015 290,1050 310,1060 320,1090 360,1110 360,1150 330,1175 270,1180 240,1210 225,1220 220,1265 200,1250 180,1240 150,1255 128,1262 125,1220 90,1215 39,1185'],
    ['L', '58,1102 125,1100 128,1078 165,1068 240,1075 250,1055 270,1055 270,1080 280,1100 310,1105 315,1150 330,1152 330,1178 260,1175 220,1200 150,1205 100,1178 50,1178'],
    ['V', '78,1110 150,1108 165,1095 215,1095 230,1108 272,1110 272,1140 260,1160 245,1178 100,1178 78,1170'],
    ['U', '110,1130 150,1110 240,1118 245,1145 150,1165 115,1145']
  ] },
  { origin: [400, 120], clip: [503, 258, 900, 500], base: 'P', shapes: [
    ['O', '309,493 347,512 347,531 415,535 440,560 490,610 530,627 640,627 660,655 730,690 920,697 920,720 885,745 945,765 945,840 309,840'],
    ['O', '1345,775 1460,775 1465,825 1490,850 1560,890 1560,930 1490,870 1430,820 1390,785'],
    ['R', '309,705 327,715 340,728 385,745 483,763 483,780 543,785 543,803 655,803 675,793 795,785 843,810 843,830 900,830 900,790 930,772 960,770 1060,772 1060,785 1150,793 1200,790 1310,780 1390,780 1420,800 1480,860 1560,930 1560,1140 309,1140'],
    ['D', '309,955 345,942 425,938 430,918 460,918 470,938 525,950 585,960 605,975 635,985 680,990 710,1005 730,960 760,940 790,925 820,910 830,880 870,862 900,840 930,822 945,800 965,783 1095,783 1095,800 1300,795 1360,795 1370,830 1395,870 1430,895 1460,930 1500,960 1560,1000 1560,1150 309,1150'],
    ['M', '940,822 970,805 1280,805 1280,822 1225,845 1205,880 1180,897 1105,900 1100,937 1087,940 1087,1018 1103,1018 1103,1035 1047,1038 1045,1055 1028,1057 1028,1070 990,1080 975,1130 893,1130 875,1105 835,1103 830,1065 810,1070 790,1100 745,1110 735,1140 715,1150 680,1150 680,1120 690,1070 720,1045 750,1030 770,990 800,960 840,955 850,910 890,885 920,870'],
    ['M', '1030,1110 1047,1110 1047,1133 1030,1133'],
    ['R', '347,1080 360,1065 372,1055 390,1070 425,1075 425,1085 347,1085'],
    ['R', '345,1100 425,1102 425,1132 388,1132 388,1115'],
    ['R', '583,1150 600,1110 625,1050 640,1100 625,1165'],
    ['G', '622,414 622,430 583,432 583,530 622,530 622,512 655,515 660,540 680,550 735,570 790,605 850,625 930,635 960,650 985,680 1000,690 1018,710 1018,725 1030,755 1430,755 1432,680 1408,655 1396,640 1396,610 1420,580 1490,572 1505,560 1530,540 1560,530 1560,414'],
    ['Y', '735,414 735,525 838,530 850,548 890,560 910,570 935,583 955,600 955,620 975,640 1000,660 1045,675 1057,710 1057,725 1075,750 1360,750 1375,725 1375,705 1358,690 1340,660 1335,600 1355,570 1410,545 1440,510 1472,490 1472,455 1463,450 1463,414'],
    ['T', '873,414 873,455 853,455 853,490 870,510 920,520 945,540 980,570 1000,600 1000,620 1060,645 1060,665 1095,690 1110,750 1260,750 1310,735 1310,680 1325,560 1340,540 1360,510 1385,495 1385,460 1395,450 1395,414'],
    ['K', '930,414 930,522 960,525 1000,550 1040,575 1060,600 1065,620 1095,680 1110,700 1135,725 1190,735 1240,725 1245,690 1270,680 1270,625 1215,620 1215,575 1270,545 1310,540 1330,535 1350,500 1345,414'],
    ['L', '970,414 970,440 1000,470 1000,525 1045,545 1060,570 1070,600 1085,620 1100,660 1140,700 1160,735 1175,735 1180,710 1215,700 1215,680 1200,625 1210,575 1240,540 1290,510 1310,480 1308,414'],
    ['V', '1038,414 1038,440 1055,455 1038,475 1040,500 1055,505 1065,560 1080,585 1090,630 1115,655 1170,655 1175,625 1195,615 1195,560 1212,540 1212,510 1230,490 1240,480 1240,463 1225,445 1230,430 1230,414'],
    ['U', '1105,432 1165,432 1165,450 1182,455 1182,530 1192,550 1175,570 1160,600 1115,600 1090,570 1080,540 1095,520 1095,460 1105,450'],
    ['S', '1110,490 1140,487 1150,470 1165,480 1172,500 1172,545 1155,590 1115,565 1105,545 1105,500'],
    ['W', '1117,540 1155,540 1155,570 1117,570']
  ] },
  { origin: [900, 240], clip: [900, 258, 1406, 720], base: 'P', shapes: [
    ['O', '0,485 30,510 60,520 75,545 110,560 130,585 150,590 155,610 175,620 190,600 262,597 262,540 247,540 247,505 190,500 170,470 152,440 152,385 112,385 100,345 52,340 52,315 33,305 33,265 60,262 110,250 110,228 180,225 205,213 290,215 296,203 303,225 322,228 322,345 362,345 362,400 378,410 382,465 402,490 420,540 440,570 460,610 470,640 488,665 460,680 450,697 440,680 405,677 395,710 370,745 445,745 460,770 490,790 500,810 510,840 545,850 555,860 555,990 500,1010 460,1040 480,1080 460,1130 480,1170 540,1190 545,1220 530,1230 510,1260 500,1340 470,1360 450,1395 420,1440 0,1440'],
    ['R', '0,510 25,545 65,575 105,595 125,635 150,660 185,660 190,690 215,720 320,745 360,775 370,810 395,840 395,870 440,885 480,920 480,960 450,985 400,1000 370,1018 210,1020 205,1028 130,1028 130,1045 50,1048 0,1060'],
    ['R', '0,1080 35,1085 35,1105 75,1105 80,1122 130,1125 130,1140 90,1145 90,1235 130,1240 130,1258 230,1262 230,1278 405,1278 440,1268 450,1290 430,1305 400,1325 380,1345 370,1365 345,1380 345,1392 320,1400 300,1425 275,1440 0,1440'],
    ['D', '0,598 12,610 40,635 70,640 72,670 92,680 92,720 155,745 155,865 112,872 110,930 12,935 0,950'],
    ['D', '172,812 188,812 188,838 172,838'],
    ['G', '0,0 110,0 110,160 100,170 35,172 30,185 12,190 0,208'],
    ['G', '382,50 382,75 373,80 373,105 382,110 382,150 402,155 402,170 410,175 412,240 440,248 440,305 450,310 450,345 460,410 480,425 482,490 495,540 520,580 530,620 540,665 565,720 600,745 615,780 635,825 655,850 662,900 662,945 640,975 625,1010 580,1020 568,1045 580,1065 600,1100 610,1160 635,1185 625,1215 600,1240 600,1260 625,1290 655,1310 625,1325 625,1440 850,1440 850,1402 1020,1402 1025,1385 1060,1380 1065,1355 1100,1352 1115,1320 1130,1310 1130,1290 1105,1265 1105,1245 1090,1235 1075,1210 1025,1180 1060,1160 1070,1120 1118,1060 1118,1028 1060,1010 1055,985 1025,970 1025,950 1055,925 1060,845 1090,820 1110,780 1130,720 1135,680 1145,630 1165,610 1170,570 1195,555 1195,520 1190,495 1195,450 1170,415 1160,400 1160,380 1175,250 1195,180 1195,70 1190,50'],
    ['Y', '512,50 512,65 527,70 527,90 518,100 527,155 512,165 512,235 537,240 537,290 530,310 540,400 558,430 565,530 585,610 610,640 620,700 630,740 655,780 660,830 690,850 700,900 700,970 670,1005 660,1040 640,1060 630,1080 680,1100 690,1150 685,1185 672,1210 690,1240 710,1290 735,1330 735,1355 770,1355 770,1325 800,1310 830,1295 850,1278 910,1275 960,1265 1000,1240 1000,1220 965,1215 965,1120 960,1080 1015,1060 980,1020 955,1000 955,935 970,890 1000,840 1020,800 1030,750 1040,690 1055,570 1080,530 1080,490 1065,470 1080,430 1080,415 1060,345 1040,280 1025,200 1040,185 1050,155 1040,140 1040,95 1032,90 1032,50'],
    ['T', '732,150 810,150 810,170 830,175 850,210 885,230 890,320 920,350 950,375 990,430 990,460 1000,467 990,475 990,565 975,610 965,690 950,770 945,860 930,920 915,940 915,1010 930,1060 900,1080 915,1130 915,1185 830,1205 770,1235 735,1235 735,1170 720,1060 705,1050 705,1020 735,1000 735,965 745,940 725,850 705,800 700,750 675,740 675,690 655,640 655,490 635,470 655,440 655,400 675,330 695,300 690,255 732,240'],
    ['K', '810,485 830,485 850,500 885,500 890,530 905,560 915,610 925,620 925,680 915,740 910,840 905,900 885,930 895,980 910,1030 900,1100 870,1150 780,1150 780,1100 745,1070 745,1010 770,980 770,910 735,850 735,745 725,715 732,600 750,560 770,540 770,505 810,500'],
    ['L', '810,697 830,697 830,740 860,740 862,820 878,840 878,1000 895,1020 895,1060 870,1075 870,1100 850,1122 810,1115 780,1090 770,1040 780,970 780,840 790,820 790,750 810,745'],
    ['V', '800,880 855,880 858,930 866,960 866,990 877,1005 877,1045 850,1070 855,1105 800,1100 780,1070 780,990 792,965 790,915 800,905'],
    ['U', '820,960 830,960 850,980 860,1000 860,1040 790,1060 785,1010 800,985 820,980'],
    ['S', '810,1020 850,1020 850,1060 800,1055'],
    ['W', '813,1030 832,1030 832,1060 813,1060'],
    ['O', '1335,50 1315,75 1315,170 1350,205 1380,235 1380,265 1370,270 1370,385 1343,410 1340,440 1315,455 1312,540 1295,595 1255,605 1240,680 1210,720 1195,760 1217,780 1210,810 1190,830 1160,880 1160,945 1140,950 1140,975 1170,1000 1210,1020 1295,1030 1300,1060 1250,1090 1210,1120 1190,1140 1205,1210 1195,1240 1200,1280 1240,1310 1245,1350 1290,1380 1312,1400 1315,1440 1520,1440 1520,50'],
    ['R', '1520,500 1500,515 1488,530 1488,545 1470,555 1470,578 1520,578'],
    ['R', '1520,658 1500,672 1470,680 1450,697 1450,725 1432,745 1410,775 1393,785 1393,810 1353,832 1353,925 1370,945 1393,965 1450,968 1470,985 1470,1003 1520,1003'],
    ['R', '1520,1122 1450,1122 1430,1140 1393,1162 1393,1200 1370,1205 1370,1220 1393,1225 1410,1260 1410,1300 1432,1310 1432,1350 1450,1370 1470,1390 1475,1405 1450,1425 1465,1440 1520,1440']
  ] },
  { origin: [960, 620], clip: [960, 720, 1406, 935], base: 'O', shapes: [
    ['R', '0,275 122,280 85,305 85,330 50,345 48,370 18,375 10,400 10,448 0,450'],
    ['R', '48,507 66,507 66,527 48,527'],
    ['R', '201,507 221,507 221,527 201,527'],
    ['R', '0,530 8,560 25,570 28,600 65,600 68,568 105,548 162,545 165,528 182,530 185,568 200,570 200,585 190,630 165,640 160,700 145,705 143,770 112,790 105,855 85,860 85,912 105,918 105,945 0,945'],
    ['P', '278,280 312,280 330,320 330,300 660,280 1135,280 1135,332 1155,335 1155,390 1135,392 1132,412 1058,410 1055,392 990,410 962,415 960,528 862,528 862,488 822,488 822,468 805,468 805,488 748,490 745,508 725,510 725,527 665,528 650,568 630,570 610,598 600,640 592,655 590,702 555,705 530,735 490,770 455,768 452,760 398,760 395,795 375,818 340,818 338,800 300,798 300,818 262,820 260,836 232,836 232,720 240,705 222,700 222,670 260,660 262,600 280,560 280,510 312,460 325,430 338,430 338,325 312,300'],
    ['O', '474,682 492,682 492,702 474,702'],
    ['G', '445,280 650,280 650,305 610,312 610,340 592,345 590,370 560,375 530,392 530,410 492,412 490,430 435,432 435,467 397,467 387,455 387,350 397,332 435,330 445,305'],
    ['R', '1270,280 1340,280 1340,310 1300,310'],
    ['R', '1155,684 1191,684 1191,702 1155,702'],
    ['R', '1155,945 1155,898 1173,893 1173,838 1155,836 1155,780 1173,778 1173,760 1191,758 1191,742 1211,742 1211,758 1340,760 1340,945'],
    ['R', '727,945 709,915 709,820 805,818 805,798 843,798 843,818 862,836 920,838 922,895 940,900 940,915 960,918 960,945']
  ] }
];

const NS = 'http://www.w3.org/2000/svg';
const node = (parent, tag, attrs, text) => {
  const el = document.createElementNS(NS, tag);
  for (const k in attrs) el.setAttribute(k, attrs[k]);
  if (text !== undefined) el.textContent = text;
  parent.appendChild(el);
  return el;
};

function inside(pts, x, y) {
  let hit = false;
  for (let i = 0, j = pts.length - 1; i < pts.length; j = i++) {
    const [xi, yi] = pts[i], [xj, yj] = pts[j];
    if ((yi > y) !== (yj > y) && x < (xj - xi) * (y - yi) / (yj - yi) + xi) hit = !hit;
  }
  return hit;
}

// Signal coverage: sample contours on the survey cell grid, merge equal runs per row.
(function drawHeat() {
  const left = 503, top = 258, right = 1406, bottom = 935, cw = 3.2, ch = 6.4;
  SECTIONS.forEach(s => {
    s.polys = s.shapes.map(([c, p]) => [c, p.split(' ').map(q => {
      const [x, y] = q.split(',').map(Number);
      return [s.origin[0] + x / 3, s.origin[1] + y / 3];
    })]);
  });
  const at = (x, y) => {
    let s;
    for (const q of SECTIONS) if (x >= q.clip[0] && x <= q.clip[2] && y >= q.clip[1] && y <= q.clip[3]) s = q;
    for (let i = s.polys.length - 1; i >= 0; i--) if (inside(s.polys[i][1], x, y)) return s.polys[i][0];
    return s.base;
  };
  const paths = {};
  const cols = Math.ceil((right - left) / cw), rows = Math.ceil((bottom - top) / ch);
  for (let r = 0; r < rows; r++) {
    const y0 = Math.round(top + r * ch), y1 = Math.min(bottom, Math.round(top + (r + 1) * ch));
    let start = left, cur = null;
    for (let c = 0; c <= cols; c++) {
      const x = left + c * cw;
      const k = c === cols ? null : at(Math.min(right - .5, x + cw / 2), Math.min(bottom - .5, top + (r + .5) * ch));
      if (k !== cur) {
        const px = Math.min(right, Math.round(x));
        if (cur) paths[cur] = (paths[cur] || '') + `M${start} ${y0}H${px}V${y1}H${start}z`;
        start = px; cur = k;
      }
    }
  }
  for (const k in paths) node(document.getElementById('heat'), 'path', { d: paths[k], fill: COLORS[k] });
})();

// Rulers: one inch is 129px, divided in eighths.
(function drawRulers() {
  const rx = document.getElementById('rx'), ry = document.getElementById('ry');
  let d = '';
  for (let i = 2; i <= 67; i++) {
    const x = Math.floor(406.700 + i * 16.125);
    d += `M${x + .5} ${i % 8 === 0 ? 131 : i % 4 === 0 ? 135 : 140}V149`;
    if (i % 8 === 0) node(rx, 'text', { x: x - 6, y: 137 }, i / 8);
  }
  node(rx, 'path', { d, stroke: '#000', fill: 'none' });
  [[503.500, '#fff'], [1406.500, '#ccc'], [1503.500, '#fff']].forEach(([x, f]) =>
    node(rx, 'path', { d: `M${x - 5} 140.500h9v3l-4.500 4.500-4.500-4.500z`, fill: f, stroke: '#000' }));
  d = '';
  for (let i = 2; i <= 54; i++) {
    const y = Math.floor(128.500 + i * 16.125);
    d += `M${i % 8 === 0 ? 408 : i % 4 === 0 ? 412 : 417} ${y + .5}H426`;
    if (i % 8 === 0) node(ry, 'text', { x: 408, y: y - 2 }, i / 8);
  }
  node(ry, 'path', { d, stroke: '#000', fill: 'none' });
  [258.500, 935.500].forEach(y =>
    node(ry, 'path', { d: `M417.500 ${y - 5}v10h3l4.500-5-4.500-5z`, fill: '#fff', stroke: '#000' }));
})();

document.getElementById('channels').innerHTML =
  [['CH 1', 31], ['CH 6', 32], ['CH 11', 38], ['CH (36,1)', 62], ['CH (48,1)', 62], ['CH (149,1)', 70]].map(([n, w]) =>
    `<div class="channel"><span class="exp"></span><span class="dots"></span><span class="check"><svg width="9" height="9"><use href="#i-tick"/></svg></span><svg width="16" height="16"><use href="#i-node"/></svg><span class="name" data-w="${w}">${n}</span></div>`).join('');

document.getElementById('swatches').innerHTML =
  ['#fb81fb', '#ae30b2', '#fb45d2', '#b82d97', '#98e2dd', '#74aed8', '#bcaade', '#5a8098', '#836cb0', '#6957b5',
   '#b9e5b1', '#c5bd58', '#72c478', '#8db42f', '#2d7a1b', '#fecfa8', '#f7b65c', '#ff3c46', '#ff300a', '#901807']
    .map(c => `<div style="background:${c}"></div>`).join('');
document.getElementById('values').innerHTML =
  [0, 1, 2, 3, 4, 5, 6, 7, 8, 9, 10].map(i => `<div>${i ? '-' + i * 10 : '0'}</div>`).join('');

// Tune tracking so each label takes its designed width.
document.querySelectorAll('[data-w]').forEach(el => {
  const range = document.createRange();
  range.selectNodeContents(el);
  const natural = range.getBoundingClientRect().width;
  el.style.letterSpacing = ((el.dataset.w - natural) / el.textContent.length).toFixed(3) + 'px';
});
```
